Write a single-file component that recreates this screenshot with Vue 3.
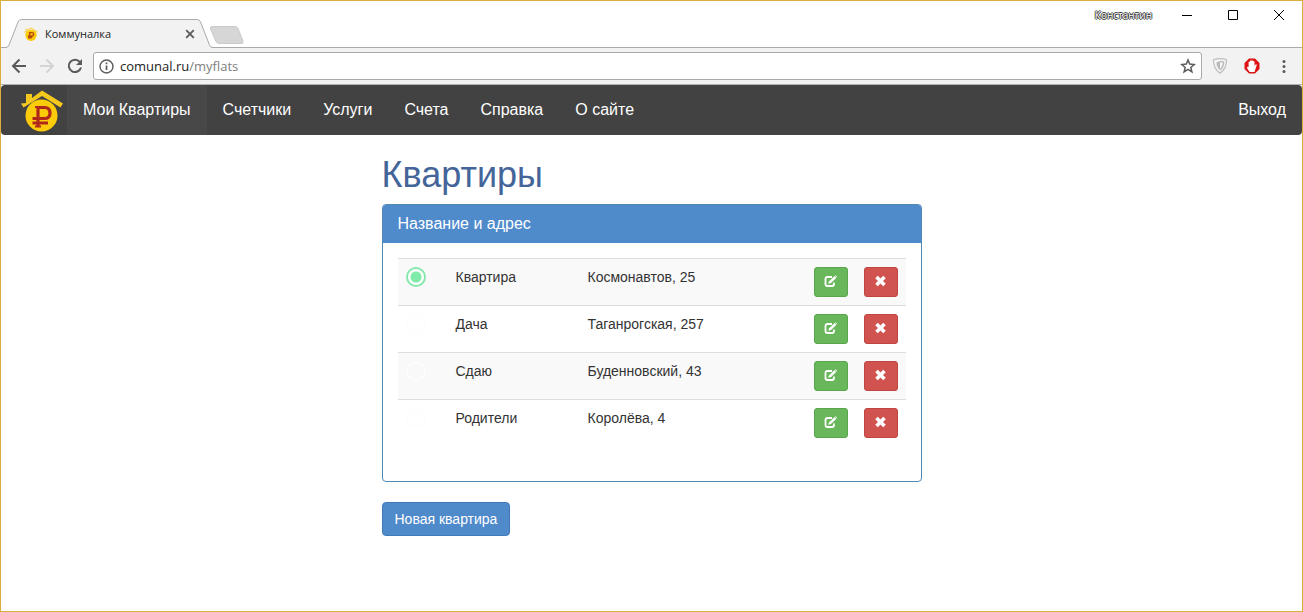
<script setup>
import { ref } from 'vue'

const links = ['Мои Квартиры', 'Счетчики', 'Услуги', 'Счета', 'Справка', 'О сайте']
const flats = [
  { name: 'Квартира', address: 'Космонавтов, 25' },
  { name: 'Дача', address: 'Таганрогская, 257' },
  { name: 'Сдаю', address: 'Буденновский, 43' },
  { name: 'Родители', address: 'Королёва, 4' }
]
const selected = ref(0)
const url = ref('comunal.ru/myflats')
</script>

<template>
  <div class="window">
    <header class="titlebar">
      <div class="tab">
        <svg class="tab-shape" width="210" height="30" viewBox="0 0 210 30" aria-hidden="true">
          <path d="M0 28.5H1Q3 28.500 4 26L13 3Q14 .5 16.500 .5H192Q194.500 .5 195.500 3L204.500 26Q205.500 28.500 208 28.500H210V30H0Z" fill="#f2f2f2" />
          <path d="M0 28.500H1Q3 28.500 4 26L13 3Q14 .5 16.500 .5H192Q194.500 .5 195.500 3L204.500 26Q205.500 28.500 208 28.500H210" fill="none" stroke="#aaa" />
        </svg>
        <svg class="favicon" width="14" height="16" viewBox="0 0 42 46" aria-hidden="true">
          <circle cx="21" cy="27" r="17" fill="#fccb0a" />
          <path d="M1 18 21 5 41 18M7 15V6" fill="none" stroke="#f7d65b" stroke-width="4" />
          <path d="M17 37V19H23Q29 19 29 24T23 29H12M12 33.500H25" fill="none" stroke="#b84a14" stroke-width="4" />
        </svg>
        <span class="tab-title">Коммуналка</span>
        <button class="tab-close" aria-label="Закрыть вкладку">
          <svg width="10" height="10" viewBox="0 0 10 10"><path d="M1.200 1.200 8.800 8.800M8.800 1.200 1.200 8.800" stroke="#5a5a5a" stroke-width="1.800" /></svg>
        </button>
      </div>
      <button class="new-tab" aria-label="Новая вкладка">
        <svg width="36" height="18" viewBox="0 0 36 18"><path d="M3 .5H26Q28 .5 29 2.500L34 15Q34.500 17.500 33 17.500H10Q8 17.500 7 15.500L1.500 3Q1 .5 3 .5Z" fill="#d6d6d6" stroke="#cacaca" /></svg>
      </button>
      <div class="controls">
        <span class="user">Константин</span>
        <button aria-label="Свернуть"><svg width="10" height="10" viewBox="0 0 10 10"><path d="M0 5.500H10" stroke="#000" /></svg></button>
        <button aria-label="Развернуть"><svg width="10" height="10" viewBox="0 0 10 10"><path d="M.5 .5H9.500V9.500H.5Z" fill="none" stroke="#000" /></svg></button>
        <button aria-label="Закрыть"><svg width="10" height="10" viewBox="0 0 10 10"><path d="M0 0 10 10M10 0 0 10" stroke="#000" /></svg></button>
      </div>
    </header>

    <div class="toolbar">
      <button class="tool" aria-label="Назад"><svg width="16" height="16" viewBox="0 0 16 16"><path d="M15 8H2.500M8.500 1.500 2 8 8.500 14.500" fill="none" stroke="#5a5a5a" stroke-width="2" /></svg></button>
      <button class="tool" aria-label="Вперёд"><svg width="16" height="16" viewBox="0 0 16 16"><path d="M1 8H13.500M7.500 1.500 14 8 7.500 14.500" fill="none" stroke="#d4d4d4" stroke-width="2" /></svg></button>
      <button class="tool" aria-label="Обновить"><svg width="16" height="16" viewBox="0 0 16 16"><path d="M12.900 4A6.200 6.200 0 1 0 14 9.500" fill="none" stroke="#5a5a5a" stroke-width="2" /><path d="M15 1V7H9Z" fill="#5a5a5a" /></svg></button>
      <div class="omnibox">
        <svg width="15" height="15" viewBox="0 0 15 15" aria-hidden="true"><circle cx="7.500" cy="7.500" r="6.500" fill="none" stroke="#5a5a5a" stroke-width="1.400" /><path d="M7.500 6.500V11M7.500 3.500V5.200" stroke="#5a5a5a" stroke-width="1.700" /></svg>
        <div class="address" role="textbox" aria-label="Адрес" contenteditable="true" spellcheck="false">{{ url.split('/')[0] }}<span class="path">/{{ url.split('/')[1] }}</span></div>
        <button aria-label="В закладки"><svg width="16" height="16" viewBox="0 0 16 16"><path d="M8 2 9.700 6.100 14.200 6.500 10.800 9.400 11.900 13.800 8 11.400 4.100 13.800 5.200 9.400 1.800 6.500 6.300 6.100Z" fill="none" stroke="#5a5a5a" stroke-width="1.500" /></svg></button>
      </div>
      <button class="tool extension" aria-label="Защита"><svg width="16" height="16" viewBox="0 0 16 16"><path d="M1.500 1.800Q8 -.4 14.500 1.800Q14.500 11 8 15.300Q1.500 11 1.500 1.800Z" fill="#f5f5f5" stroke="#bdbdbd" stroke-width="1.200" /><path d="M4.500 4.200Q6 3.500 8 3.600V12Q4.500 9 4.500 4.200Z" fill="#b8b8b8" /><path d="M8 3.600Q10 3.500 11.500 4.200Q11.500 9 8 12" fill="none" stroke="#bdbdbd" stroke-width="1.500" /></svg></button>
      <button class="tool extension" aria-label="Блокировка рекламы"><svg width="16" height="16" viewBox="0 0 16 16"><path d="M5 .5H11L15.500 5V11L11 15.500H5L.5 11V5Z" fill="#dc1414" /><path d="M5.600 14 3 10Q3 8.300 4.600 9V4Q5.300 2.800 6 4V3Q6.800 1.800 7.500 2.800Q8.300 1.500 9 2.800V3.200Q10 2.500 10.500 3.800V8L11.500 6.500Q13 6 12.700 7.300L10.500 14Z" fill="#fff" /></svg></button>
      <button class="tool extension" aria-label="Меню"><svg width="16" height="16" viewBox="0 0 16 16"><g fill="#5a5a5a"><circle cx="8" cy="3.500" r="1.500" /><circle cx="8" cy="8.500" r="1.500" /><circle cx="8" cy="13.500" r="1.500" /></g></svg></button>
    </div>

    <nav class="navbar">
      <a class="brand" href="#" aria-label="Коммуналка">
        <svg width="42" height="42" viewBox="0 0 42 42">
          <circle cx="20.500" cy="25.500" r="16" fill="#fccb0a" />
          <path d="M5 13V4H11V8L21 .5 42 13.500 39.500 17.500 21 6 2.500 17.500 0 13.500Z" fill="#f4c81c" />
          <path d="M17 36.500V17.500H23.500Q29 17.500 29 23T23.500 28.500H11.500M11.500 33H27" fill="none" stroke="#b0281a" stroke-width="3.200" />
          <path d="M14 17H18M14 36.500H20" stroke="#b0281a" stroke-width="2" />
        </svg>
      </a>
      <a v-for="(link, i) in links" :key="link" href="#" class="nav-link" :class="{ active: i === 0 }">{{ link }}</a>
      <a href="#" class="nav-link logout">Выход</a>
    </nav>

    <main class="content">
      <h1>Квартиры</h1>
      <section class="panel">
        <h2>Название и адрес</h2>
        <div class="panel-body">
          <table>
            <colgroup><col class="col-pick"><col class="col-name"><col><col class="col-action"><col class="col-action"></colgroup>
            <tbody>
              <tr v-for="(flat, i) in flats" :key="flat.name">
                <td><input v-model="selected" type="radio" name="flat" :value="i" :aria-label="flat.name"></td>
                <td>{{ flat.name }}</td>
                <td>{{ flat.address }}</td>
                <td>
                  <button class="action edit" aria-label="Изменить">
                    <svg width="14" height="14" viewBox="0 0 14 14"><path d="M8 2H3.500Q1.500 2 1.500 4V9Q1.500 11 3.500 11H8Q10 11 10 9V7.500" fill="none" stroke="#fff" stroke-width="1.800" /><path d="M4.300 8.700 5 6 10.300 1 12.200 3 7 8Z" fill="#fff" /><path d="M10.800 .7 11.500 .2 13.300 2 12.700 2.600Z" fill="#fff" /><path d="M9.300 .5V1.800L4.500 6.500" fill="none" stroke="#69b75b" stroke-width=".8" /></svg>
                  </button>
                </td>
                <td>
                  <button class="action remove" aria-label="Удалить">
                    <svg width="14" height="14" viewBox="0 0 14 14"><path d="M2.500 2 10.500 10M10.500 2 2.500 10" stroke="#fff" stroke-width="3.600" /></svg>
                  </button>
                </td>
              </tr>
            </tbody>
          </table>
        </div>
      </section>
      <button class="new-flat">Новая квартира</button>
    </main>
  </div>
</template>

<style>
body { margin: 0; }
</style>

<style scoped>
.window {
  box-sizing: border-box;
  min-height: 100vh;
  border: 1px solid #dcae3c;
  background: #fff;
  color: #333;
  font: 14px/20px "Liberation Sans", Arial, sans-serif;
}
button {
  padding: 0;
  border: 0;
  background: none;
  color: inherit;
  font: inherit;
  cursor: pointer;
}
svg { display: block; }

.titlebar {
  display: flex;
  align-items: flex-end;
  height: 46px;
  border-bottom: 1px solid #aaa;
  font: 11px/16px "Open Sans", "Noto Sans", sans-serif;
}
.tab {
  position: relative;
  display: flex;
  align-items: center;
  box-sizing: border-box;
  width: 210px;
  height: 30px;
  margin: 0 0 -2px 4px;
  padding: 0 20px 0 19px;
}
.tab-shape {
  position: absolute;
  inset: 0;
}
.favicon, .tab-title, .tab-close { position: relative; }
.tab-title {
  margin-left: 7px;
  color: #222;
}
.tab-close { margin-left: auto; }
.new-tab { margin: 0 0 3px -6px; }
.controls {
  display: flex;
  align-items: center;
  align-self: flex-start;
  height: 28px;
  margin-left: auto;
}
.controls button {
  display: grid;
  place-items: center;
  width: 46px;
  height: 28px;
}
.user {
  margin-right: 12px;
  color: #fff;
  font-size: 10px;
  text-shadow: 1px 0 #333, -1px 0 #333, 0 1px #333, 0 -1px #333;
}

.toolbar {
  display: flex;
  align-items: center;
  height: 36px;
  padding: 0 4px;
  border-bottom: 1px solid #b1b3b1;
  background: #f2f2f2;
}
.tool {
  display: grid;
  place-items: center;
  flex: none;
  width: 28px;
  height: 28px;
}
.extension { margin-left: 4px; }
.omnibox {
  display: flex;
  flex: 1;
  align-items: center;
  box-sizing: border-box;
  height: 28px;
  margin-left: 4px;
  padding: 0 5px;
  border: 1px solid #a9a9a9;
  border-radius: 3px;
  background: #fff;
}
.address {
  flex: 1;
  margin-left: 6px;
  color: #222;
  font: 13px/20px "Open Sans", "Noto Sans", sans-serif;
}
.path { color: #808080; }

.navbar {
  display: flex;
  height: 50px;
  border-radius: 4px;
  background: #424242;
}
.brand {
  padding: 5px 4px 0 20px;
}
.nav-link {
  padding: 15px 16px;
  color: #fff;
  font-size: 16px;
  text-decoration: none;
}
.active { background: #484848; }
.logout { margin-left: auto; }

.content {
  max-width: 540px;
  margin: 0 auto;
  padding: 20px 0;
}
h1 {
  margin: 0 0 10px;
  color: #446599;
  font-size: 36px;
  font-weight: 400;
  line-height: 39px;
}
.panel {
  margin-bottom: 20px;
  overflow: hidden;
  border: 1px solid #4f88b3;
  border-radius: 4px;
}
h2 {
  margin: -1px;
  padding: 11px 16px 10px;
  background: #4f8acb;
  color: #fff;
  font-size: 16px;
  font-weight: 400;
  line-height: 18px;
}
.panel-body {
  padding: 16px 15px 35px;
}
table {
  width: 100%;
  border-spacing: 0;
  table-layout: fixed;
}
.col-pick, .col-action { width: 50px; }
.col-name { width: 132px; }
td {
  padding: 8px;
  border-top: 1px solid #ddd;
  vertical-align: top;
}
tr:nth-child(odd) { background: #f9f9f9; }
input[type="radio"] {
  display: block;
  box-sizing: border-box;
  width: 20px;
  height: 20px;
  margin: 0;
  border: 2px solid #fdfdfd;
  border-radius: 50%;
  appearance: none;
}
input[type="radio"]:checked {
  border-color: #86e8ae;
  background: radial-gradient(circle, #7eeba9 5px, #fbfffc 6px);
}
.action {
  display: grid;
  place-items: center;
  box-sizing: border-box;
  width: 34px;
  height: 30px;
  border: 1px solid;
  border-radius: 3px;
}
.edit {
  border-color: #5aa64c;
  background: #69b75b;
}
.remove {
  border-color: #c04440;
  background: #d05350;
}
.new-flat {
  padding: 6px 12px;
  border: 1px solid #417bb9;
  border-radius: 4px;
  background: #4f8acb;
  color: #fff;
}
</style>
